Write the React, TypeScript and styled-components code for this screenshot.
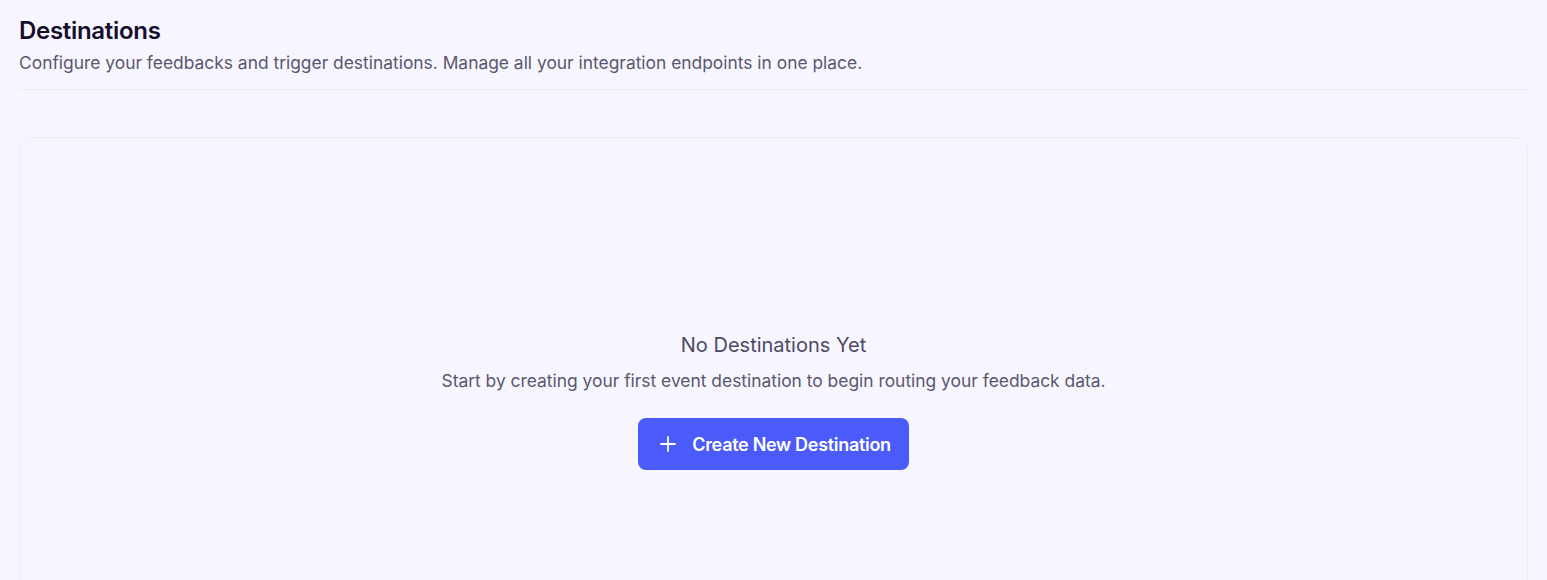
import React from "react";
import styled, { createGlobalStyle } from "styled-components";

const GlobalStyle = createGlobalStyle`
    html, body {
        margin: 0;
        padding: 0;
        background-color: #f7f6fe;
        font-family: Inter, "Noto Sans", sans-serif;
    }
`;

const Page = styled.div`
    padding: 15px 19px 0 19px;
    height: 580px;
    overflow: hidden;
    box-sizing: border-box;
`;

const Header = styled.div`
    display: flex;
    flex-direction: column;
    gap: 4px;
    padding-bottom: 14px;
    border-bottom: 1px solid #ebe9f5;
`;

const Title = styled.h1`
    margin: 0;
    font-size: 24px;
    line-height: 32px;
    font-weight: 600;
    color: #150f2e;
    letter-spacing: -0.3px;
`;

const Subtitle = styled.p`
    margin: 0;
    font-size: 17.4px;
    line-height: 24px;
    color: #5b5770;
`;

const Card = styled.div`
    margin-top: 47px;
    height: 527px;
    box-sizing: border-box;
    border: 1px solid #edecf6;
    border-radius: 14px;
    display: flex;
    align-items: center;
    justify-content: center;
`;

const EmptyState = styled.div`
    display: flex;
    flex-direction: column;
    align-items: center;
`;

const EmptyTitle = styled.div`
    font-size: 20px;
    line-height: 28px;
    color: #4d4965;
`;

const EmptyText = styled.div`
    margin-top: 10px;
    font-size: 17.4px;
    line-height: 24px;
    color: #5b5770;
`;

const CreateButton = styled.button`
    margin-top: 25px;
    height: 52px;
    padding: 0 18px 0 20px;
    display: flex;
    align-items: center;
    gap: 14px;
    border: none;
    border-radius: 8px;
    background-color: #4b5bf9;
    color: #ffffff;
    font-family: inherit;
    font-size: 18px;
    font-weight: 600;
    letter-spacing: -0.3px;
    cursor: pointer;
    :hover {
        filter: brightness(0.95);
    }
`;

const PlusIcon = () => (
    <svg width="20" height="20" viewBox="0 0 20 20" fill="none">
        <path d="M10 3v14M3 10h14" stroke="#ffffff" strokeWidth="1.8" strokeLinecap="round" />
    </svg>
);

const App = () => {
    return (
        <Page>
            <GlobalStyle />
            <Header>
                <Title>Destinations</Title>
                <Subtitle>
                    Configure your feedbacks and trigger destinations. Manage all your
                    integration endpoints in one place.
                </Subtitle>
            </Header>
            <Card>
                <EmptyState>
                    <EmptyTitle>No Destinations Yet</EmptyTitle>
                    <EmptyText>
                        Start by creating your first event destination to begin routing
                        your feedback data.
                    </EmptyText>
                    <CreateButton>
                        <PlusIcon />
                        Create New Destination
                    </CreateButton>
                </EmptyState>
            </Card>
        </Page>
    );
};

export default App;
